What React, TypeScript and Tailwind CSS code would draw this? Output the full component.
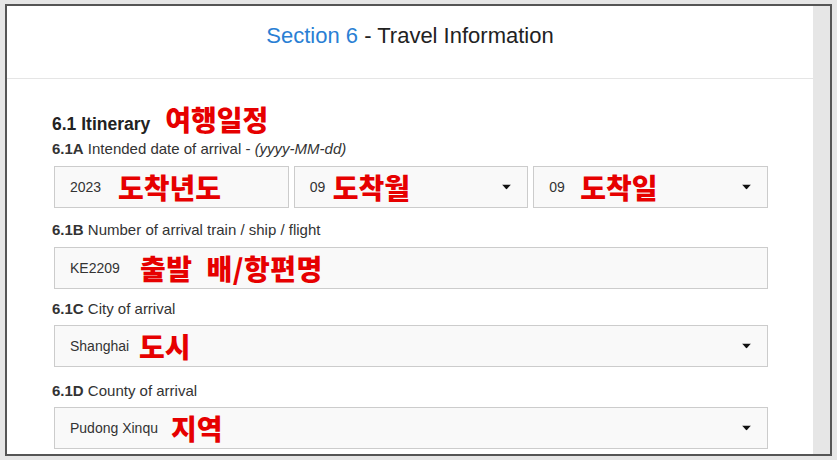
import React from "react";

const KO = { fontFamily: '"Noto Sans CJK KR", "Noto Sans", sans-serif' };

function Caret() {
  return (
    <svg width="9" height="5" viewBox="0 0 9 5" className="absolute right-[16px] top-1/2 -translate-y-1/2">
      <path d="M0 0 L9 0 L4.5 5 Z" fill="#111" />
    </svg>
  );
}

function Box({
  value,
  note,
  noteLeft,
  select,
  className = "",
  noteClass = "",
}: {
  value: string;
  note: string;
  noteLeft: number;
  select?: boolean;
  className?: string;
  noteClass?: string;
}) {
  return (
    <div
      className={
        "relative h-[42px] border border-[#cccccc] bg-[#f9f9f9] flex items-center pl-[15px] text-[14px] text-[#333] " +
        className
      }
    >
      <span>{value}</span>
      <span
        className={"absolute top-1/2 -translate-y-1/2 text-[28px] font-black leading-none text-[#e60000] " + noteClass}
        style={{ ...KO, left: noteLeft }}
      >
        {note}
      </span>
      {select && <Caret />}
    </div>
  );
}

function Label({ code, text, italic, className = "" }: { code: string; text: string; italic?: string; className?: string }) {
  return (
    <div className={"h-[20px] leading-[20px] text-[15px] text-[#333] " + className}>
      <span className="font-bold">{code}</span> {text}
      {italic && <i>{italic}</i>}
    </div>
  );
}

export default function App() {
  return (
    <div
      className="w-[837px] h-[460px] bg-[#e6e6e6] pt-[4px] pl-[5px] overflow-hidden"
      style={{ fontFamily: '"Liberation Sans", Arial, sans-serif' }}
    >
      <div className="w-[827px] h-[452px] border-2 border-[#555555] flex overflow-hidden">
        <div className="w-[806px] h-full bg-white shrink-0">
          <div className="h-[73px] border-b border-[#e5e5e5] pt-[18px] text-center text-[22px] leading-[24px] text-[#222]">
            <span className="text-[#2a7fd4]">Section 6</span> - Travel Information
          </div>
          <div className="pl-[45px] pr-[45px]">
            <div className="mt-[24px] h-[30px] leading-[30px] flex items-baseline">
              <span className="text-[17.5px] font-bold text-[#222]">6.1 Itinerary</span>
              <span className="ml-[15px] text-[28px] font-black text-[#e60000] relative top-[1px]" style={KO}>
                여행일정
              </span>
            </div>

            <Label code="6.1A" text="Intended date of arrival - " italic="(yyyy-MM-dd)" className="mt-[6px]" />
            <div className="mt-[7px] ml-[2px] grid grid-cols-3 gap-[5px]">
              <Box value="2023" note="도착년도" noteLeft={63} />
              <Box value="09" note="도착월" noteLeft={38} select />
              <Box value="09" note="도착일" noteLeft={46} select />
            </div>

            <Label code="6.1B" text="Number of arrival train / ship / flight" className="mt-[12px]" />
            <Box
              value="KE2209"
              note="출발 배/항편명"
              noteLeft={85}
              noteClass="[word-spacing:7px] tracking-[0.5px]"
              className="mt-[7px] ml-[2px]"
            />

            <Label code="6.1C" text="City of arrival" className="mt-[10px]" />
            <Box value="Shanghai" note="도시" noteLeft={84} select className="mt-[6px] ml-[2px]" />

            <Label code="6.1D" text="County of arrival" className="mt-[14px]" />
            <Box value="Pudong Xinqu" note="지역" noteLeft={116} select className="mt-[6px] ml-[2px]" />
          </div>
        </div>
        <div className="flex-1 bg-[#e6e6e6]" />
      </div>
    </div>
  );
}
